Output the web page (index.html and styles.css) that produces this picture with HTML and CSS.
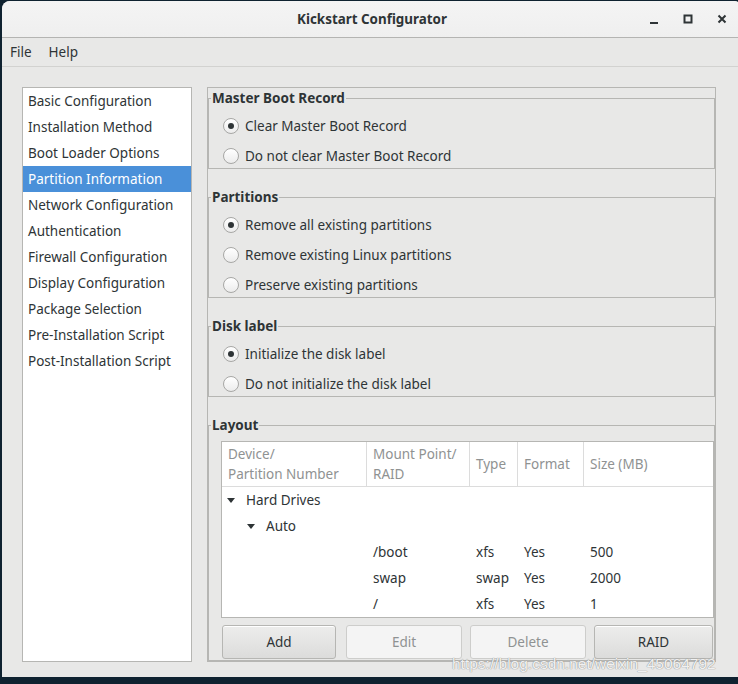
FILE: index.html
```html
<!DOCTYPE html>
<html>
<head>
<meta charset="utf-8">
<title>Kickstart Configurator</title>
<link rel="stylesheet" href="styles.css">
</head>
<body>
<div class="window">
  <header class="titlebar">
    <span class="title">Kickstart Configurator</span>
    <div class="controls">
      <span class="ctl"><svg width="10" height="10" viewBox="0 0 10 10"><rect x="1" y="8" width="8" height="2" fill="#2e3436"/></svg></span>
      <span class="ctl"><svg width="10" height="10" viewBox="0 0 10 10"><rect x="1.5" y="1.5" width="7" height="7" fill="none" stroke="#2e3436" stroke-width="2"/></svg></span>
      <span class="ctl"><svg width="10" height="10" viewBox="0 0 10 10"><path d="M1.5 1.5 L8.5 8.5 M8.5 1.5 L1.5 8.5" stroke="#2e3436" stroke-width="2" fill="none"/></svg></span>
    </div>
  </header>
  <nav class="menubar"><span>File</span><span>Help</span></nav>
  <main class="content">
    <ul class="sidebar">
      <li>Basic Configuration</li>
      <li>Installation Method</li>
      <li>Boot Loader Options</li>
      <li class="selected">Partition Information</li>
      <li>Network Configuration</li>
      <li>Authentication</li>
      <li>Firewall Configuration</li>
      <li>Display Configuration</li>
      <li>Package Selection</li>
      <li>Pre-Installation Script</li>
      <li>Post-Installation Script</li>
    </ul>
    <section class="panel">
      <fieldset class="frame">
        <legend>Master Boot Record</legend>
        <div class="options">
          <label class="radio"><span class="dot checked"></span>Clear Master Boot Record</label>
          <label class="radio"><span class="dot"></span>Do not clear Master Boot Record</label>
        </div>
      </fieldset>
      <fieldset class="frame">
        <legend>Partitions</legend>
        <div class="options">
          <label class="radio"><span class="dot checked"></span>Remove all existing partitions</label>
          <label class="radio"><span class="dot"></span>Remove existing Linux partitions</label>
          <label class="radio"><span class="dot"></span>Preserve existing partitions</label>
        </div>
      </fieldset>
      <fieldset class="frame">
        <legend>Disk label</legend>
        <div class="options">
          <label class="radio"><span class="dot checked"></span>Initialize the disk label</label>
          <label class="radio"><span class="dot"></span>Do not initialize the disk label</label>
        </div>
      </fieldset>
      <fieldset class="frame layout">
        <legend>Layout</legend>
        <div class="tree">
          <div class="thead">
            <div class="th">Device/<br>Partition Number</div>
            <div class="th">Mount Point/<br>RAID</div>
            <div class="th">Type</div>
            <div class="th">Format</div>
            <div class="th last">Size (MB)</div>
          </div>
          <div class="tbody">
            <div class="tr"><div class="td node"><span class="exp"></span>Hard Drives</div></div>
            <div class="tr"><div class="td node lvl2"><span class="exp"></span>Auto</div></div>
            <div class="tr"><div class="td"></div><div class="td">/boot</div><div class="td">xfs</div><div class="td">Yes</div><div class="td">500</div></div>
            <div class="tr"><div class="td"></div><div class="td">swap</div><div class="td">swap</div><div class="td">Yes</div><div class="td">2000</div></div>
            <div class="tr"><div class="td"></div><div class="td">/</div><div class="td">xfs</div><div class="td">Yes</div><div class="td">1</div></div>
          </div>
        </div>
        <div class="buttons">
          <button class="btn first">Add</button>
          <button class="btn" disabled>Edit</button>
          <button class="btn" disabled>Delete</button>
          <button class="btn">RAID</button>
        </div>
      </fieldset>
    </section>
  </main>
  <div class="watermark">https://blog.csdn.net/weixin_45064792</div>
</div>
</body>
</html>
```
FILE: styles.css
```css
* { box-sizing: border-box; }
html, body { margin: 0; padding: 0; }
body {
  background: #0f2230;
  width: 738px;
  height: 684px;
  overflow: hidden;
  font-family: "Noto Sans", "Open Sans", sans-serif;
  font-size: 13.5px;
  color: #2e3436;
}
.window {
  position: relative;
  margin: 1px 0 0 2px;
  width: 740px;
  height: 676px;
  background: #e8e8e7;
  border-radius: 8px 8px 0 0;
  overflow: hidden;
}
.titlebar {
  height: 37px;
  background: linear-gradient(#f4f4f4, #efefef);
  border-bottom: 1px solid #b4b4b2;
  display: flex;
  align-items: center;
  justify-content: center;
  position: relative;
}
.title {
  font-weight: 700;
  font-size: 13.4px;
  color: #2e3436;
}
.controls {
  position: absolute;
  right: 3px;
  top: 0;
  height: 36px;
  display: flex;
}
.ctl {
  width: 34px;
  height: 36px;
  display: flex;
  align-items: center;
  justify-content: center;
}
.menubar {
  height: 29px;
  border-bottom: 1px solid #d2d2d0;
  display: flex;
  align-items: center;
  gap: 17px;
  padding-left: 8px;
}
.content {
  display: flex;
  gap: 15px;
  padding: 20px 0 0 20px;
}
.sidebar {
  list-style: none;
  margin: 0;
  padding: 0;
  width: 170px;
  height: 575px;
  background: #fff;
  border: 1px solid #b6b6b3;
}
.sidebar li {
  height: 26px;
  line-height: 26px;
  padding-left: 5px;
  white-space: nowrap;
}
.sidebar li.selected {
  background: #4a90d9;
  color: #fff;
}
.panel {
  width: 509px;
  height: 575px;
  border: 1px solid #b6b6b3;
  display: flex;
  flex-direction: column;
  gap: 18px;
}
.frame {
  margin: 0;
  padding: 0;
  border: 1px solid #b6b6b3;
  min-width: 0;
}
.frame legend {
  margin-left: 2px;
  padding: 0 1px;
  height: 20px;
  line-height: 20px;
  font-weight: 700;
  font-size: 13.5px;
}
.options {
  padding: 6px 0 0 14px;
  display: flex;
  flex-direction: column;
  gap: 6px;
}
.radio {
  height: 24px;
  display: flex;
  align-items: center;
  gap: 6px;
}
.dot {
  width: 16px;
  height: 16px;
  border-radius: 50%;
  border: 1px solid #a7a7a5;
  background: linear-gradient(#ffffff, #ececec);
  display: flex;
  align-items: center;
  justify-content: center;
}
.dot.checked::after {
  content: "";
  width: 6px;
  height: 6px;
  border-radius: 50%;
  background: #2e3436;
}
.layout { flex: 1; }
.layout .tree { margin: 6px 0 0 12px; }
.tree {
  background: #fff;
  border: 1px solid #b6b6b3;
  height: 177px;
}
.thead, .tr {
  display: grid;
  grid-template-columns: 145px 103px 48px 66px 1fr;
}
.thead {
  height: 45px;
  border-bottom: 1px solid #dcdcdc;
  color: #8f9292;
}
.th {
  border-right: 1px solid #dcdcdc;
  padding-left: 6px;
  line-height: 20px;
  display: flex;
  align-items: center;
}
.th.last { border-right: none; }
.tr { height: 26px; }
.td {
  padding-left: 6px;
  line-height: 26px;
  white-space: nowrap;
}
.td.node {
  grid-column: 1 / 3;
  display: flex;
  align-items: center;
  padding-left: 5px;
}
.td.lvl2 { padding-left: 25px; }
.exp {
  width: 0;
  height: 0;
  border-left: 4px solid transparent;
  border-right: 4px solid transparent;
  border-top: 5px solid #2e3436;
  margin-right: 11px;
}
.buttons {
  margin: 7px 1px 0 13px;
  display: grid;
  grid-template-columns: 116px 116px 116px 1fr;
  gap: 8px;
}
.btn {
  height: 34px;
  font-family: "Noto Sans", "Open Sans", sans-serif;
  font-size: 13.5px;
  color: #2e3436;
  border: 1px solid #b6b6b3;
  border-radius: 3px;
  background: linear-gradient(#ededec, #dcdcdb);
  box-shadow: inset 0 1px #fff;
  padding: 0;
}
.btn.first { width: 114px; }
.btn:disabled {
  background: #f4f4f4;
  border-color: #cdcdcb;
  color: #8f9292;
  box-shadow: none;
}
.watermark {
  position: absolute;
  left: 450px;
  top: 654px;
  font-family: "Liberation Sans", Arial, sans-serif;
  font-size: 15.5px;
  color: rgba(255, 255, 255, 0.9);
  text-shadow: 0 0 1px #8a8a8a, 0 0 1px #9a9a9a;
  white-space: nowrap;
}
```
